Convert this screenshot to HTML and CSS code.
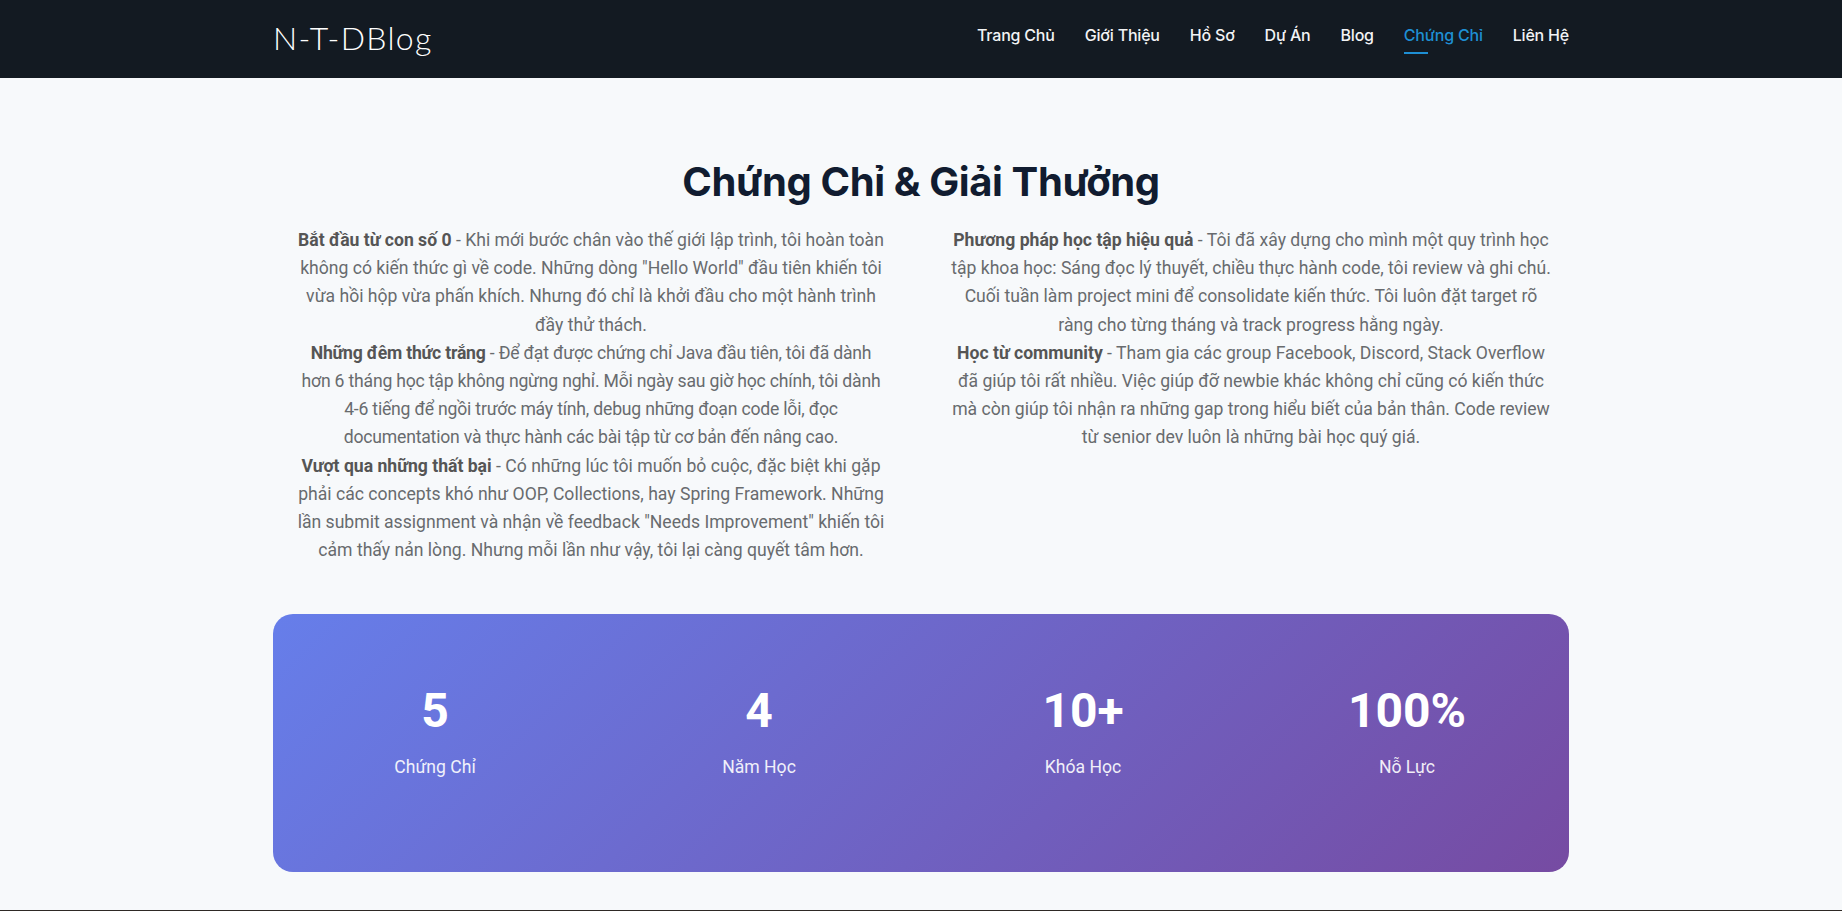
FILE: index.html
```html
<!DOCTYPE html>
<html lang="vi">
<head>
<meta charset="utf-8">
<title>N-T-DBlog - Chứng Chỉ</title>
<link rel="stylesheet" href="styles.css">
</head>
<body>
<header class="navbar">
  <div class="container nav-inner">
    <a class="brand" href="#">N-T-DBlog</a>
    <nav class="nav-links">
      <a href="#">Trang Chủ</a>
      <a href="#">Giới Thiệu</a>
      <a href="#">Hồ Sơ</a>
      <a href="#">Dự Án</a>
      <a href="#">Blog</a>
      <a href="#" class="active">Chứng Chỉ</a>
      <a href="#">Liên Hệ</a>
    </nav>
  </div>
</header>

<main class="certs">
  <h2 class="section-title">Chứng Chỉ &amp; Giải Thưởng</h2>
  <div class="story">
    <div class="story-col story-left">
      <p><strong>Bắt đầu từ con số 0</strong> - Khi mới bước chân vào thế giới lập trình, tôi hoàn toàn không có kiến thức gì về code. Những dòng "Hello World" đầu tiên khiến tôi vừa hồi hộp vừa phấn khích. Nhưng đó chỉ là khởi đầu cho một hành trình đầy thử thách.</p>
      <p class="tight"><strong>Những đêm thức trắng</strong> - Để đạt được chứng chỉ Java đầu tiên, tôi đã dành hơn 6 tháng học tập không ngừng nghỉ. Mỗi ngày sau giờ học chính, tôi dành 4-6 tiếng để ngồi trước máy tính, debug những đoạn code lỗi, đọc documentation và thực hành các bài tập từ cơ bản đến nâng cao.</p>
      <p><strong>Vượt qua những thất bại</strong> - Có những lúc tôi muốn bỏ cuộc, đặc biệt khi gặp phải các concepts khó như OOP, Collections, hay Spring Framework. Những lần submit assignment và nhận về feedback "Needs Improvement" khiến tôi cảm thấy nản lòng. Nhưng mỗi lần như vậy, tôi lại càng quyết tâm hơn.</p>
    </div>
    <div class="story-col story-right">
      <p><strong>Phương pháp học tập hiệu quả</strong> - Tôi đã xây dựng cho mình một quy trình học tập khoa học: Sáng đọc lý thuyết, chiều thực hành code, tôi review và ghi chú. Cuối tuần làm project mini để consolidate kiến thức. Tôi luôn đặt target rõ ràng cho từng tháng và track progress hằng ngày.</p>
      <p><strong>Học từ community</strong> - Tham gia các group Facebook, Discord, Stack Overflow đã giúp tôi rất nhiều. Việc giúp đỡ newbie khác không chỉ cũng có kiến thức mà còn giúp tôi nhận ra những gap trong hiểu biết của bản thân. Code review từ senior dev luôn là những bài học quý giá.</p>
    </div>
  </div>

  <div class="container">
    <div class="stats">
      <div class="stat">
        <div class="stat-num">5</div>
        <div class="stat-label">Chứng Chỉ</div>
      </div>
      <div class="stat">
        <div class="stat-num">4</div>
        <div class="stat-label">Năm Học</div>
      </div>
      <div class="stat">
        <div class="stat-num">10+</div>
        <div class="stat-label">Khóa Học</div>
      </div>
      <div class="stat">
        <div class="stat-num">100%</div>
        <div class="stat-label">Nỗ Lực</div>
      </div>
    </div>
  </div>
</main>
<footer class="footer"></footer>
</body>
</html>
```

FILE: styles.css
```css
* { box-sizing: border-box; }

html, body {
  margin: 0;
  padding: 0;
}

body {
  background: #f7f9fb;
  font-family: Roboto, "Liberation Sans", sans-serif;
  overflow: hidden;
}

.container {
  width: 1296px;
  margin: 0 auto;
}

/* Navbar */
.navbar {
  background: #131a22;
  height: 78px;
}

.nav-inner {
  height: 100%;
  display: flex;
  align-items: center;
  justify-content: space-between;
}

.brand {
  font-family: Lato, "Open Sans", sans-serif;
  font-weight: 300;
  font-size: 32px;
  letter-spacing: 1.3px;
  color: #ffffff;
  text-decoration: none;
  margin-top: -4px;
}

.nav-links {
  display: flex;
  gap: 30px;
  margin-top: -8px;
}

.nav-links a {
  position: relative;
  font-family: Inter, "Noto Sans", sans-serif;
  font-weight: 500;
  font-size: 16px;
  color: #f2f3f5;
  text-decoration: none;
  letter-spacing: -0.2px;
}

.nav-links a.active {
  color: #1e8fd4;
}

.nav-links a.active::after {
  content: "";
  position: absolute;
  left: 0;
  bottom: -9px;
  width: 24px;
  height: 2px;
  background: #1e8fd4;
}

/* Section */
.certs {
  padding-top: 80px;
  padding-bottom: 38px;
}

.section-title {
  margin: 0 0 20px;
  text-align: center;
  font-family: Inter, "Noto Sans", sans-serif;
  font-weight: 700;
  font-size: 40px;
  line-height: 48px;
  color: #111c30;
  letter-spacing: -0.4px;
}

.story {
  width: 1320px;
  margin: 0 auto;
  display: grid;
  grid-template-columns: 1fr 1fr;
}

.story-col {
  display: flex;
  flex-direction: column;
  align-items: center;
  text-align: center;
}

.story-left p {
  width: 593px;
}

.story-right p {
  width: 604px;
}

.story-col p {
  margin: 0;
  font-size: 17.6px;
  line-height: 28.2px;
  color: #686b6e;
}

.story-col p.tight {
  letter-spacing: -0.2px;
}

.story-col strong {
  color: #555;
  font-weight: 700;
}

/* Stats */
.stats {
  margin-top: 50px;
  height: 258px;
  border-radius: 20px;
  background: linear-gradient(135deg, #667eea 0%, #764ba2 100%);
  display: grid;
  grid-template-columns: repeat(4, 1fr);
  padding: 68px 0 0;
  color: #fff;
}

.stat {
  text-align: center;
}

.stat-num {
  font-size: 48px;
  line-height: 57.6px;
  font-weight: 700;
}

.stat-label {
  margin-top: 14px;
  font-size: 17.6px;
  line-height: 26px;
  opacity: 0.9;
}

.footer {
  height: 40px;
  background: #2e2925;
}
```
